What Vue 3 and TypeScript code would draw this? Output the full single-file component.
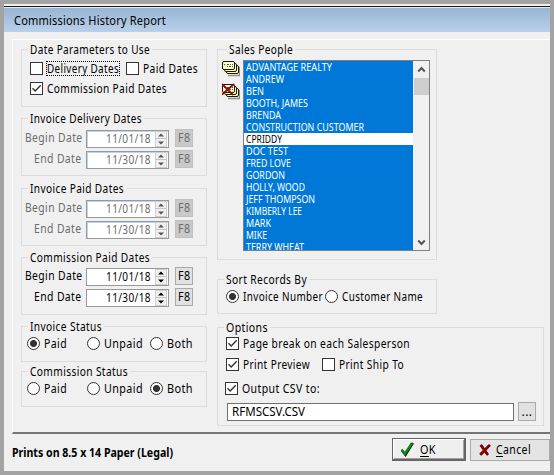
<script setup lang="ts">
import { reactive, ref } from 'vue'

interface DateGroup { title: string; width: number; enabled: boolean; kind: string; dates: string[] }
interface RadioGroup { title: string; width: number; kind: string; selected: string }

const dateGroups = reactive<DateGroup[]>([
  { title: 'Invoice Delivery Dates', width: 111, enabled: false, kind: 'delivery', dates: ['11/01/18', '11/30/18'] },
  { title: 'Invoice Paid Dates', width: 93, enabled: false, kind: 'paid', dates: ['11/01/18', '11/30/18'] },
  { title: 'Commission Paid Dates', width: 119, enabled: true, kind: 'commission', dates: ['11/01/18', '11/30/18'] },
])
const statusGroups = reactive<RadioGroup[]>([
  { title: 'Invoice Status', width: 71, kind: 'istatus', selected: 'Paid' },
  { title: 'Commission Status', width: 97, kind: 'cstatus', selected: 'Both' },
])
const statuses = [
  { name: 'Paid', width: 22 },
  { name: 'Unpaid', width: 38 },
  { name: 'Both', width: 25 },
]
const people: [string, number][] = [
  ['ADVANTAGE REALTY', 85], ['ANDREW', 37], ['BEN', 17], ['BOOTH, JAMES', 61], ['BRENDA', 34],
  ['CONSTRUCTION CUSTOMER', 117], ['CPRIDDY', 35], ['DOC TEST', 41], ['FRED LOVE', 44], ['GORDON', 38],
  ['HOLLY, WOOD', 58], ['JEFF THOMPSON', 68], ['KIMBERLY LEE', 55], ['MARK', 24], ['MIKE', 20], ['TERRY WHEAT', 57],
]
const unselected = ref('CPRIDDY')
const sortBy = ref('Invoice Number')

// Condenses a label so that its letters span the given width.
const vFit = {
  mounted(el: HTMLElement, binding: { value: number }) {
    el.style.display = 'inline-block'
    const natural = el.getBoundingClientRect().width
    const target = binding.value + 1
    el.style.transformOrigin = '0 0'
    el.style.transform = `scaleX(${(target / natural).toFixed(4)})`
    el.style.marginRight = `${(target - natural).toFixed(2)}px`
  },
}
</script>

<template>
  <main class="window">
    <header class="title"><span v-fit="151">Commissions History Report</span></header>
    <section class="panel">
      <div class="col left">
        <div class="group params">
          <div class="legend"><span v-fit="119">Date Parameters to Use</span></div>
          <div class="row">
            <label class="opt"><i class="check"></i><span class="focus"><span v-fit="71">Delivery Dates</span></span></label>
            <label class="opt second"><i class="check"></i><span v-fit="54">Paid Dates</span></label>
          </div>
          <div class="row">
            <label class="opt"><i class="check"><svg viewBox="0 0 11 11"><path d="M1.5 5.3 4.2 8 9.7 2.3" /></svg></i><span v-fit="119">Commission Paid Dates</span></label>
          </div>
        </div>

        <div v-for="g in dateGroups" :key="g.kind" class="group dates" :class="[g.kind, { off: !g.enabled }]">
          <div class="legend"><span v-fit="g.width">{{ g.title }}</span></div>
          <div v-for="(d, i) in g.dates" :key="i" class="date-row">
            <div class="date-label"><span v-fit="i ? 46.5 : 56.5">{{ i ? 'End Date' : 'Begin Date' }}</span></div>
            <div class="date-input">
              <span v-fit="44">{{ d }}</span>
              <div class="spin">
                <svg viewBox="0 0 12 16"><path class="split" d="M0 7.5H12" /><path d="M3 5.6 6 2.4 9 5.6ZM3 10.4 6 13.6 9 10.4Z" /></svg>
              </div>
            </div>
            <button class="f8"><span v-fit="11.5">F8</span></button>
          </div>
        </div>

        <div v-for="g in statusGroups" :key="g.kind" class="group status" :class="g.kind">
          <div class="legend"><span v-fit="g.width">{{ g.title }}</span></div>
          <div class="radios">
            <label v-for="s in statuses" :key="s.name" class="opt"><i class="radio" :class="{ on: g.selected === s.name }"></i><span v-fit="s.width">{{ s.name }}</span></label>
          </div>
        </div>
      </div>

      <div class="col right">
        <div class="group sales">
          <div class="legend"><span v-fit="63">Sales People</span></div>
          <div class="sales-body">
            <div class="tools">
              <svg v-for="n in 2" :key="n" class="cards" viewBox="0 0 18 17">
                <path class="shade" d="M6 15.5h11.5V7" />
                <rect class="card" x="4.5" y="5.5" width="12" height="8" rx="1.5" />
                <rect class="card" x="2.5" y="3.5" width="12" height="8" rx="1.5" />
                <rect class="card" x="0.5" y="1.5" width="12" height="8" rx="1.5" />
                <path class="face" d="M4 2.5h8v5H4Z" />
                <path class="marks" d="M2 4.5h1M5 4.5h2M8 4.5h1M10 4.5h1M5 6.5h1M7 6.5h2M10 6.5h1" />
                <path v-if="n === 2" class="cross" d="M0 1 11 12M12 1 0 11.5" />
              </svg>
            </div>
            <div class="list">
              <ul>
                <li v-for="[name, w] in people" :key="name" :class="{ plain: name === unselected }"><span v-fit="w">{{ name }}</span></li>
              </ul>
              <div class="scroll">
                <svg viewBox="0 0 9 7"><path d="M1.2 5.5 4.5 2 7.8 5.5" /></svg>
                <div class="thumb"></div>
                <svg class="down" viewBox="0 0 9 7"><path d="M1.2 1.5 4.5 5 7.8 1.5" /></svg>
              </div>
            </div>
          </div>
        </div>

        <div class="group sort">
          <div class="legend"><span v-fit="80">Sort Records By</span></div>
          <div class="radios">
            <label class="opt"><i class="radio" :class="{ on: sortBy === 'Invoice Number' }"></i><span v-fit="79">Invoice Number</span></label>
            <label class="opt"><i class="radio" :class="{ on: sortBy === 'Customer Name' }"></i><span v-fit="80">Customer Name</span></label>
          </div>
        </div>

        <div class="group options">
          <div class="legend"><span v-fit="41">Options</span></div>
          <div class="row">
            <label class="opt"><i class="check"><svg viewBox="0 0 11 11"><path d="M1.5 5.3 4.2 8 9.7 2.3" /></svg></i><span v-fit="166">Page break on each Salesperson</span></label>
          </div>
          <div class="row">
            <label class="opt preview"><i class="check"><svg viewBox="0 0 11 11"><path d="M1.5 5.3 4.2 8 9.7 2.3" /></svg></i><span v-fit="66">Print Preview</span></label>
            <label class="opt"><i class="check"></i><span v-fit="64">Print Ship To</span></label>
          </div>
          <div class="row csv">
            <label class="opt"><i class="check"><svg viewBox="0 0 11 11"><path d="M1.5 5.3 4.2 8 9.7 2.3" /></svg></i><span v-fit="77">Output CSV to:</span></label>
          </div>
          <div class="file">
            <div class="file-input"><span v-fit="72">RFMSCSV.CSV</span></div>
            <button class="browse"><span>...</span></button>
          </div>
        </div>
      </div>
    </section>

    <footer class="footer">
      <strong><span v-fit="160">Prints on 8.5 x 14 Paper (Legal)</span></strong>
      <button class="ok">
        <svg viewBox="0 0 14 16"><path class="tick-shadow" d="M2 9.5 5.5 14 13 2" /><path class="tick" d="M1.5 8.5 5 12.5 12 2" /></svg>
        <span v-fit="15"><u>O</u>K</span>
      </button>
      <button class="cancel">
        <svg viewBox="0 0 14 14"><path class="x-shadow" d="M3 2 10 12M12 2 2.5 12" /><path class="x" d="M2.5 2 9.5 11.5M11.5 2 2 11.5" /></svg>
        <span v-fit="34"><u>C</u>ancel</span>
      </button>
    </footer>
  </main>
</template>

<style>
body { margin: 0; background: #a3a3a3; overflow: hidden; }
</style>

<style scoped>
* { box-sizing: border-box; }
.window {
  width: 546px; height: 467px; margin: 4px; padding-top: 2px; overflow: hidden;
  background: #f0f0f0; color: #000; font: 12px/17px "Noto Sans", "Open Sans", sans-serif; letter-spacing: 0.45px; white-space: nowrap;
}
.title {
  height: 26px; border-top: 1px solid #1b1b1b; box-shadow: inset 0 1px #dfe9f3;
  background: linear-gradient(#98b4d2, #b9d0ea); padding: 6px 0 0 10px; font-size: 12.5px; line-height: 16px; letter-spacing: 0.2px;
}
.panel {
  display: flex; height: 395px; margin: 7px 0 0 8px; padding: 9px 0 0 8px;
  border-top: 1px solid #fff; border-left: 1px solid #fff; border-bottom: 2px solid #767676;
}
.left { width: 186px; margin-right: 10px; }
.right { width: 327px; }
.group { border: 1px solid #dcdcdc; }
.legend { width: max-content; height: 16px; margin: -9px 0 0 6px; padding: 0 2px; background: #f0f0f0; }
.opt { display: flex; align-items: flex-start; }
.check { flex: none; width: 13px; height: 13px; margin: 2px 4px 0 0; border: 1px solid #333; background: #fff; }
.check svg { display: block; width: 11px; height: 11px; fill: none; stroke: #333; stroke-width: 1.4; }
.radio { flex: none; width: 13px; height: 13px; margin: 2px 4px 0 0; border: 1px solid #333; border-radius: 50%; background: #fff; }
.radio.on { background: radial-gradient(circle, #333 3.1px, #fff 3.9px); }
.params { height: 58px; }
.params .row { display: flex; height: 20px; padding-left: 8px; }
.params .legend { margin-bottom: 3px; }
.focus { height: 15px; width: 74px; margin: 1px 0 0 -1px; outline: 1px dotted #000; outline-offset: -1px; padding-left: 1px; line-height: 15px; }
.second { margin-left: 6px; }
.dates { height: 58px; margin-top: 11px; }
.dates.paid { margin-top: 12px; }
.dates .legend { margin-bottom: 3px; }
.commission .legend { margin-bottom: 2px; }
.date-row { display: flex; height: 21px; }
.date-label { width: 60px; text-align: right; margin-right: 4px; }
.date-input { display: flex; width: 83px; height: 18px; margin: 1px 6px 0 0; padding: 0 1px 0 19px; border: 1px solid #999; background: #fff; justify-content: space-between; line-height: 16px; }
.spin { width: 12px; height: 16px; background: #f0f0f0; box-shadow: inset 0 0 0 1px #cfcfcf; }
.spin svg { display: block; width: 12px; height: 16px; fill: #000; }
.spin .split { stroke: #c4c4c4; stroke-width: 1; }
.off .date-label, .off .date-input, .off .f8 { color: #6d6d6d; }
.off .date-input { box-shadow: inset 1px 1px #bcd3ec; }
.off .spin svg { fill: #555; }
button { display: block; margin: 0; padding: 0; color: #000; font: inherit; letter-spacing: inherit; border: 1px solid #aaa; background: #e1e1e1; border-radius: 0; }
.f8 { width: 18px; height: 18px; line-height: 16px; }
.off .f8 { background: #c9c9c9; border-color: #c0c0c0; }
.status { height: 36px; }
.istatus { margin-top: 11px; }
.cstatus { margin-top: 9px; }
.status .legend, .sort .legend { margin-bottom: 1px; }
.radios { display: grid; grid-template-columns: 60px 63px 1fr; padding-left: 5px; }
.sales { width: 220px; height: 211px; }
.sales .legend { margin-left: 9px; margin-bottom: 3px; }
.sales-body { display: flex; padding-left: 3px; }
.tools { width: 22px; padding-left: 1px; }
.cards { display: block; width: 18px; height: 17px; margin: 0 0 6px; }
.card { fill: #ffffb0; stroke: #1a1a10; stroke-width: 1; }
.shade { fill: none; stroke: #909090; stroke-width: 1.5; }
.face { fill: #fafaf2; }
.marks { stroke: #55553a; stroke-width: 1; fill: none; }
.cross { fill: none; stroke: #8b1010; stroke-width: 1.9; }
.list { display: flex; width: 187px; height: 191px; border: 1px solid #7b7f87; background: #fff; overflow: hidden; }
ul { width: 169px; margin: 0; padding: 0; list-style: none; background: #0078d7; color: #fff; font-size: 10.3px; letter-spacing: 0; }
li { height: 12px; line-height: 12px; padding-left: 2px; }
li.plain { background: #fff; color: #000; }
.scroll { display: flex; flex-direction: column; width: 16px; background: #f0f0f0; align-items: center; margin-left: auto; padding: 5px 0 4px; }
.scroll svg { width: 9px; height: 7px; fill: none; stroke: #555; stroke-width: 2; }
.thumb { width: 15px; height: 17px; margin-top: 5px; background: #cdcdcd; }
.down { margin-top: auto; }
.sort { width: 220px; height: 35px; margin-top: 19px; }
.sort .radios { grid-template-columns: 99px 1fr; padding-left: 8px; }
.options { height: 99px; margin-top: 13px; }
.options .row { display: flex; height: 21px; padding-left: 8px; }
.preview { width: 96px; }
.options .csv { margin-top: 3px; height: 22px; padding-left: 7px; }
.file { display: flex; padding-left: 9px; }
.file-input { width: 287px; height: 18px; margin: 1px 4px 0 0; padding-left: 4px; border: 1px solid #707070; background: #fff; line-height: 16px; letter-spacing: 0; }
.browse { width: 18px; height: 19px; line-height: 15px; }
.footer { display: flex; padding: 4px 0 0 8px; }
strong { width: 387px; padding-top: 6px; letter-spacing: 0; }
.ok { display: flex; width: 75px; height: 23px; margin-right: 4px; padding: 2px 0 0 7px; border: 1px solid #666; border-right: 2px solid #666; border-bottom: 2px solid #666; background: #efefef; box-shadow: inset 1px 1px #fff, inset -1px -1px #a0a0a0; }
.ok svg { width: 14px; height: 16px; margin-right: 6px; }
.ok span, .cancel span { line-height: 17px; }
.cancel { display: flex; flex: none; width: 80px; height: 22px; margin-top: 1px; padding: 1px 0 0 7px; background: #e4e4e4; }
.cancel svg { width: 14px; height: 14px; margin: 2px 4px 0 0; }
.ok path, .cancel path { fill: none; stroke-width: 2.3; }
.ok .tick { stroke: #0a8a1a; }
.ok .tick-shadow { stroke: #102010; }
.cancel .x { stroke: #8b0000; }
.cancel .x-shadow { stroke: #200; }
u { text-underline-offset: 2px; text-decoration-thickness: 1px; }
</style>
